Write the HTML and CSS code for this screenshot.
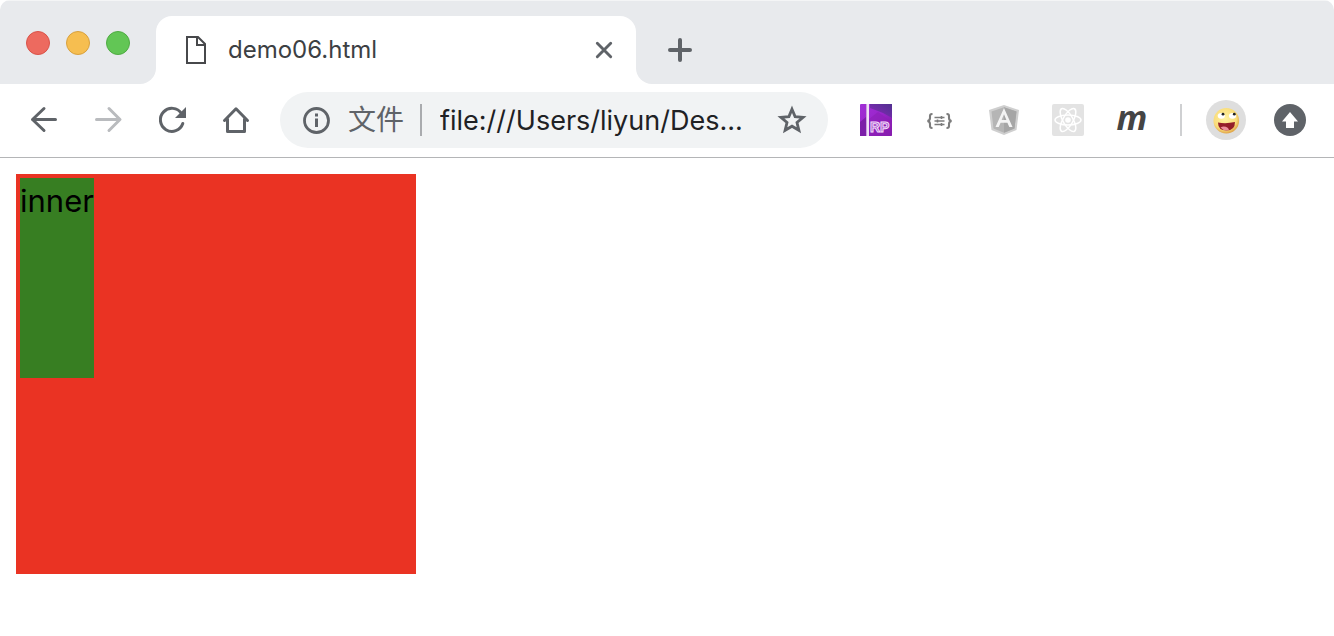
FILE: index.html
```html
<!DOCTYPE html>
<html lang="zh-CN">
<head>
<meta charset="utf-8">
<title>demo06.html</title>
<link rel="stylesheet" href="styles.css">
</head>
<body>
<div class="browser">
  <header class="tab-strip">
    <div class="window-controls">
      <button class="light light-close" aria-label="Close window"></button>
      <button class="light light-minimize" aria-label="Minimize window"></button>
      <button class="light light-zoom" aria-label="Zoom window"></button>
    </div>
    <div class="tab-slot">
      <div class="tab">
        <svg class="tab-icon" width="24" height="32" viewBox="0 0 24 32" fill="none" stroke="#47484b" stroke-width="2"><path d="M3 3h11l7 7v19H3z"/><path d="M13 3v8h8"/></svg>
        <span class="tab-title">demo06.html</span>
        <button class="icon-button tab-close" aria-label="Close tab">
          <svg width="24" height="24" viewBox="0 0 24 24" stroke="#5f6368" stroke-width="2.900" stroke-linecap="round"><path d="M5.300 5.300l13.400 13.400M18.700 5.300L5.300 18.700"/></svg>
        </button>
      </div>
    </div>
    <div class="strip-rest">
      <button class="icon-button new-tab" aria-label="New tab">
        <svg width="32" height="32" viewBox="0 0 32 32" stroke="#5f6368" stroke-width="4" stroke-linecap="round"><path d="M16 6v20M6 16h20"/></svg>
      </button>
    </div>
  </header>

  <div class="toolbar">
    <nav class="tools">
      <button class="icon-button tool" aria-label="Back">
        <svg width="32" height="32" viewBox="0 0 32 32" fill="none" stroke="#5f6368" stroke-width="3" stroke-linecap="round" stroke-linejoin="round"><path d="M27.500 15.500H4.500M16 4.500l-11.500 11 11.500 11"/></svg>
      </button>
      <button class="icon-button tool" aria-label="Forward">
        <svg width="32" height="32" viewBox="0 0 32 32" fill="none" stroke="#b9bbbe" stroke-width="3" stroke-linecap="round" stroke-linejoin="round"><path d="M4.500 15.500h23M17 4.500l11 11-11 11"/></svg>
      </button>
      <button class="icon-button tool" aria-label="Reload">
        <svg width="32" height="32" viewBox="0 0 32 32"><path d="M26.800 19.500A11.500 11.500 0 1 1 25.500 9.500" fill="none" stroke="#5f6368" stroke-width="3" stroke-linecap="round"/><path d="M30 3v11H19z" fill="#5f6368"/></svg>
      </button>
      <button class="icon-button tool" aria-label="Home">
        <svg width="32" height="32" viewBox="0 0 32 32" fill="none" stroke="#5f6368" stroke-width="3" stroke-linecap="round" stroke-linejoin="round"><path d="M4.500 16.500L16 4.800l11.500 11.700M7.500 15v12.500h17V15"/></svg>
      </button>
    </nav>
    <div class="address-bar">
      <svg class="info" width="28" height="28" viewBox="0 0 28 28"><circle cx="14.500" cy="14.500" r="12" fill="none" stroke="#5f6368" stroke-width="2.800"/><path d="M13 12.500h3v8.500h-3zM13 7.500h3v3h-3z" fill="#5f6368"/></svg>
      <label class="scheme" for="url">文件</label>
      <input class="url" id="url" type="text" value="file:///Users/liyun/Des...">
      <button class="icon-button star" aria-label="Bookmark">
        <svg width="32" height="32" viewBox="0 0 32 32" fill="none" stroke="#5f6368" stroke-width="2.800"><path d="M16 5.200l3.100 7.400 8 .7-6.100 5.200 1.900 7.800L16 22.200l-6.900 4.100 1.900-7.800-6.100-5.200 8-.7z"/></svg>
      </button>
    </div>
    <div class="tools">
      <button class="icon-button tool" aria-label="RP">
        <svg width="32" height="32" viewBox="0 0 32 32">
          <defs>
            <linearGradient id="cover" x1="0" y1="0" x2="1" y2="1"><stop offset="0" stop-color="#a12fd6"/><stop offset=".5" stop-color="#9a25cb"/><stop offset="1" stop-color="#7c189f"/></linearGradient>
            <linearGradient id="fold" x1="0" y1="1" x2="1" y2="0"><stop offset="0" stop-color="#8a28bd"/><stop offset="1" stop-color="#51308f"/></linearGradient>
          </defs>
          <rect width="32" height="32" rx="1" fill="url(#cover)"/>
          <path d="M10 0h22v14L23 9 10 4z" fill="url(#fold)"/>
          <path d="M9 15l9-7 14 10v14H9z" fill="#8c1fb6" opacity=".6"/>
          <path d="M0 18l6-5v19H0z" fill="#7b1ea8"/>
          <path d="M6 0h1v32H6z" fill="#c9a0dc"/><path d="M7 0h2v32H7z" fill="#efe0f6"/>
          <text class="rp-text" x="10" y="28">RP</text>
        </svg>
      </button>
      <button class="icon-button tool" aria-label="JSON formatter">
        <svg width="32" height="32" viewBox="0 0 32 32" fill="none" stroke="#7c7c7c"><path d="M8.500 10H8q-2 0-2 2v2q0 2.500-2.500 3 2.500.5 2.500 3v2q0 2 2 2h.5M22.500 10h.5q2 0 2 2v2q0 2.500 2.500 3-2.500.5-2.500 3v2q0 2-2 2h-.5" stroke-width="2.100"/><path d="M10.500 13.500h10M10.500 17h10M10.500 20.500h10" stroke-width="1.300"/><path d="M17.500 12v3M13.500 15.500v3M17.500 19v3" stroke-width="1.600"/></svg>
      </button>
      <button class="icon-button tool" aria-label="Angular">
        <svg width="32" height="32" viewBox="0 0 32 32"><path d="M16 1l15 5-2.500 20L16 31 3.500 26 1 6z" fill="#cfcfcf"/><path d="M16 3.200L28.500 7.500 26.500 24.500 16 28.800 5.500 24.500 3.500 7.500z" fill="#b5b5b5"/><path d="M16 3.200L28.500 7.500 26.500 24.500 16 28.800z" fill="#a6a6a6"/><path d="M16 4L7.500 23h3.200l1.900-4.300h6.800l1.900 4.300h3.200zm0 6.200l2.400 5.800h-4.800z" fill="#f4f4f4" fill-rule="evenodd"/></svg>
      </button>
      <button class="icon-button tool" aria-label="React">
        <svg width="32" height="32" viewBox="0 0 32 32" fill="none" stroke="#fff" stroke-width="1.500"><rect width="32" height="32" rx="2" fill="#e3e3e3" stroke="none"/><ellipse cx="16" cy="16" rx="13" ry="5"/><ellipse cx="16" cy="16" rx="13" ry="5" transform="rotate(60 16 16)"/><ellipse cx="16" cy="16" rx="13" ry="5" transform="rotate(120 16 16)"/><circle cx="16" cy="16" r="2.800" fill="#fff" stroke="none"/></svg>
      </button>
      <button class="icon-button tool m-logo">m</button>
    </div>
    <span class="divider"></span>
    <div class="tools">
      <button class="icon-button tool" aria-label="Profile">
        <svg width="40" height="40" viewBox="0 0 40 40">
          <defs><radialGradient id="face" cx=".45" cy=".4" r=".6"><stop offset="0" stop-color="#fff2a0"/><stop offset=".75" stop-color="#f9dc7a"/><stop offset="1" stop-color="#dfa347"/></radialGradient></defs>
          <circle cx="20" cy="20" r="20" fill="#dedede"/>
          <circle cx="20.300" cy="20.800" r="12.800" fill="url(#face)"/>
          <ellipse cx="15.300" cy="15.800" rx="3.600" ry="2.900" fill="#fff"/><ellipse cx="26.500" cy="15.800" rx="3.600" ry="2.900" fill="#fff"/>
          <circle cx="17" cy="14.200" r="1.400" fill="#222"/><circle cx="28.300" cy="14.200" r="1.400" fill="#222"/>
          <path d="M12 22.500q8 1.500 17-.5 0 8.500-8.500 8.500T12 22.500z" fill="#941e29"/>
          <path d="M14.500 27.500q3.500-2 7.500.500l1 2q-5 1.500-8.500-2.500z" fill="#ec8f9b"/>
        </svg>
      </button>
      <button class="icon-button tool" aria-label="Update">
        <svg width="32" height="32" viewBox="0 0 32 32"><circle cx="16" cy="16" r="16" fill="#5f6368"/><path d="M16 8l8 9.500h-4V24h-8v-6.500H8z" fill="#fff"/></svg>
      </button>
    </div>
  </div>

  <main class="page">
    <div class="outer"><div class="inner">inner</div></div>
  </main>
</div>
</body>
</html>
```
FILE: styles.css
```css
* { box-sizing: border-box; }
body {
  margin: 0;
  background: #fff;
  font-family: Inter, "Noto Sans CJK SC", sans-serif;
}
.browser {
  display: flex;
  flex-direction: column;
  min-height: 100vh;
}
.tab-strip {
  display: flex;
  height: 84px;
  overflow: hidden;
  border-radius: 10px 10px 0 0;
}
.window-controls {
  display: flex;
  gap: 16px;
  width: 156px;
  padding: 30px 0 0 26px;
  background: #e8eaed;
  border-top: 1px solid #f4f5f6;
  border-bottom-right-radius: 16px;
}
.light {
  width: 24px;
  height: 24px;
  padding: 0;
  border: 1px solid;
  border-radius: 50%;
}
.light-close { background: #ed6a5f; border-color: #d95349; }
.light-minimize { background: #f6be50; border-color: #d8a13e; }
.light-zoom { background: #62c655; border-color: #4fab43; }
.tab-slot {
  flex: 0 1 480px;
  padding-top: 15px;
  background: linear-gradient(#e8eaed 40px, #fff 40px);
  border-top: 1px solid #f4f5f6;
}
.tab {
  display: flex;
  align-items: center;
  height: 68px;
  padding: 0 16px 0 28px;
  background: #fff;
  border-radius: 16px 16px 0 0;
}
.tab-title {
  flex: 1;
  margin-left: 20px;
  padding-bottom: 2px;
  color: #3c4043;
  font-size: 24px;
}
.strip-rest {
  flex: 1;
  padding: 29px 0 0 24px;
  background: #e8eaed;
  border-top: 1px solid #f4f5f6;
  border-bottom-left-radius: 16px;
}
.icon-button {
  display: flex;
  align-items: center;
  justify-content: center;
  padding: 0;
  border: 0;
  background: none;
}
.new-tab { width: 40px; height: 40px; }
.tab-close { width: 32px; height: 32px; }
.toolbar {
  display: flex;
  align-items: center;
  padding: 8px 12px 9px;
  border-bottom: 1px solid #b4b5b7;
}
.tools { display: flex; }
.tool { width: 64px; height: 56px; }
.address-bar {
  display: flex;
  flex: 1;
  align-items: center;
  min-width: 0;
  height: 56px;
  margin: 0 16px 0 12px;
  padding: 0 20px 0 22px;
  background: #f1f3f4;
  border-radius: 28px;
}
.info { flex: none; }
.scheme {
  flex: none;
  margin-left: 18px;
  padding-right: 16px;
  border-right: 2px solid #a9abae;
  color: #5f6368;
  font-size: 28px;
  line-height: 32px;
}
.url {
  flex: 1;
  min-width: 0;
  padding: 0 0 0 18px;
  border: 0;
  outline: 0;
  background: none;
  color: #202124;
  font-family: Inter, sans-serif;
  font-size: 27px;
}
.m-logo {
  padding-bottom: 6px;
  color: #444;
  font: italic bold 34px "Open Sans", sans-serif;
}
.rp-text {
  fill: #a04bc4;
  stroke: #f3dcfb;
  stroke-width: 1px;
  font: bold 14px "Liberation Sans", sans-serif;
}
.divider {
  width: 2px;
  height: 32px;
  margin: 0 12px 0 16px;
  background: #cfd0d2;
}
.page { padding: 16px; }
.outer {
  width: 400px;
  height: 400px;
  padding: 4px;
  background: #ea3323;
}
.inner {
  width: fit-content;
  height: 200px;
  background: #377e22;
  color: #000;
  font-size: 31px;
  line-height: 46px;
}
```
